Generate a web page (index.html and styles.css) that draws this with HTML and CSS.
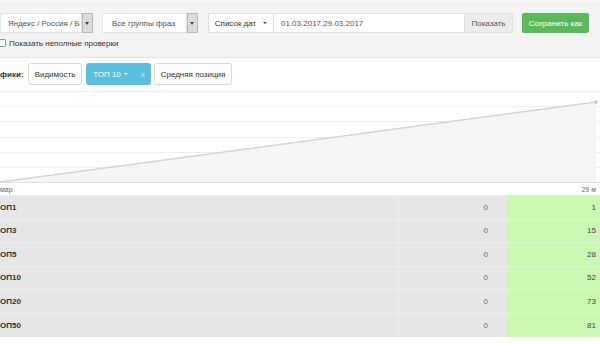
FILE: index.html
```html
<!DOCTYPE html>
<html lang="ru">
<head>
    <meta charset="UTF-8">
    <meta name="viewport" content="width=device-width, initial-scale=1.0">
    <title>Проверки позиций</title>
    <link rel="stylesheet" href="styles.css">
</head>
<body>
    <div class="toolbar">
        <div class="toolbar-row">
            <div class="select select-engine">
                <span class="select-value">Яндекс / Россия / Б</span>
                <span class="select-arrow"></span>
            </div>
            <div class="select select-groups">
                <span class="select-value">Все группы фраз</span>
                <span class="select-arrow"></span>
            </div>
            <div class="date-group">
                <button class="btn btn-dates">Список дат <span class="caret"></span></button>
                <div class="date-input">01.03.2017,29.03.2017</div>
                <button class="btn btn-show">Показать</button>
            </div>
            <button class="btn btn-save">Сохранить как</button>
        </div>
        <label class="check-row">
            <span class="checkbox"></span>
            Показать неполные проверки
        </label>
    </div>

    <div class="charts-bar">
        <span class="charts-label">фики:</span>
        <button class="btn btn-default btn-visibility">Видимость</button>
        <div class="btn-split">
            <button class="btn btn-info">ТОП 10 <span class="caret caret-light"></span></button>
            <button class="btn btn-info btn-close">x</button>
        </div>
        <button class="btn btn-default btn-position">Средняя позиция</button>
    </div>

    <div class="chart">
        <svg width="600" height="93" viewBox="0 0 600 93">
            <g stroke="#eeeeee" stroke-width="1">
                <line x1="0" y1="0.5" x2="600" y2="0.5"/>
                <line x1="0" y1="15.5" x2="600" y2="15.5"/>
                <line x1="0" y1="30.5" x2="600" y2="30.5"/>
                <line x1="0" y1="46.5" x2="600" y2="46.5"/>
                <line x1="0" y1="61.5" x2="600" y2="61.5"/>
                <line x1="0" y1="76.5" x2="600" y2="76.5"/>
            </g>
            <polygon points="0,91 596,11 596,91" fill="#f5f5f5"/>
            <line x1="0" y1="91.5" x2="600" y2="91.5" stroke="#dddddd"/>
            <line x1="0" y1="91" x2="596" y2="11" stroke="#d4d4d4" stroke-width="1.5"/>
            <circle cx="596" cy="11" r="2" fill="#cccccc"/>
        </svg>
    </div>
    <div class="axis">
        <span>мар</span>
        <span>29 м</span>
    </div>

    <table class="stats">
        <tbody></tbody>
    </table>

    <script>
        const rows = [
            { name: 'ОП1', before: 0, after: 1 },
            { name: 'ОП3', before: 0, after: 15 },
            { name: 'ОП5', before: 0, after: 28 },
            { name: 'ОП10', before: 0, after: 52 },
            { name: 'ОП20', before: 0, after: 73 },
            { name: 'ОП50', before: 0, after: 81 }
        ];
        const body = document.querySelector('.stats tbody');

        rows.forEach(item => {
            const tr = document.createElement('tr');
            tr.innerHTML = `
                <td class="name">${item.name}</td>
                <td class="before">${item.before}</td>
                <td class="after">${item.after}</td>
            `;
            body.appendChild(tr);
        });
    </script>
</body>
</html>
```

FILE: styles.css
```css
body {
    margin: 0;
    font-family: "Liberation Sans", Arial, sans-serif;
    font-size: 8px;
    color: #333;
    background-color: #fff;
    overflow: hidden;
}

button {
    font-family: inherit;
    font-size: 8px;
}

.toolbar {
    height: 58px;
    background-color: #f3f3f3;
    border-top: 2px solid #f8f8f8;
    border-bottom: 1px solid #e4e4e4;
    box-sizing: border-box;
    padding-top: 11px;
}

.toolbar-row {
    display: flex;
    align-items: center;
    height: 20px;
}

.select {
    display: flex;
    height: 20px;
    box-sizing: border-box;
}

.select-value {
    flex: 1;
    display: flex;
    align-items: center;
    background-color: #fff;
    border: 1px solid #e2e2e2;
    color: #555;
}

.select-arrow {
    width: 9px;
    background-color: #dcdcdc;
    border: 1px solid #b9b9b9;
    position: relative;
}

.select-arrow::after {
    content: "";
    position: absolute;
    left: 2px;
    top: 8px;
    border-left: 2.5px solid transparent;
    border-right: 2.5px solid transparent;
    border-top: 3px solid #444;
}

.select-engine {
    width: 93px;
}

.select-engine .select-value {
    padding-left: 7px;
}

.select-groups {
    width: 96px;
    margin-left: 9px;
}

.select-groups .select-value {
    padding-left: 9px;
}

.date-group {
    display: flex;
    width: 305px;
    height: 20px;
    margin-left: 10px;
    border: 1px solid #e0e0e0;
    box-sizing: border-box;
    background-color: #fff;
}

.btn {
    border: none;
    padding: 0;
    margin: 0;
    cursor: pointer;
    display: flex;
    align-items: center;
    justify-content: center;
    box-sizing: border-box;
}

.btn-dates {
    width: 65px;
    background-color: #fff;
    color: #333;
    border-right: 1px solid #e0e0e0;
}

.caret {
    display: inline-block;
    margin-left: 7px;
    border-left: 2.5px solid transparent;
    border-right: 2.5px solid transparent;
    border-top: 2.5px solid #444;
}

.caret-light {
    margin-left: 3px;
    border-top-color: #fff;
}

.date-input {
    flex: 1;
    padding-left: 7px;
    display: flex;
    align-items: center;
    color: #555;
}

.btn-show {
    width: 48px;
    background-color: #ececec;
    color: #555;
    border-left: 1px solid #dcdcdc;
}

.btn-save {
    margin-left: 9px;
    width: 67px;
    height: 20px;
    background-color: #5cb85c;
    color: #fff;
    border-radius: 2px;
}

.check-row {
    display: flex;
    align-items: center;
    height: 10px;
    margin-top: 5px;
    color: #333;
}

.checkbox {
    width: 6px;
    height: 6px;
    margin-left: -2px;
    margin-right: 3px;
    border: 1px solid #999;
    background-color: #fff;
    border-radius: 1px;
}

.charts-bar {
    display: flex;
    align-items: center;
    height: 33px;
    padding-bottom: 1px;
    box-sizing: border-box;
}

.charts-label {
    font-weight: bold;
    width: 28px;
}

.btn-default {
    height: 22px;
    background-color: #fff;
    color: #333;
    border: 1px solid #d8d8d8;
    border-radius: 3px;
}

.btn-visibility {
    width: 54px;
}

.btn-position {
    width: 78px;
}

.btn-split {
    display: flex;
    margin: 0 3px 0 4px;
}

.btn-info {
    height: 22px;
    background-color: #5bc0de;
    color: #fff;
}

.btn-split .btn-info:first-child {
    width: 49px;
    border-radius: 3px 0 0 3px;
}

.btn-close {
    width: 16px;
    border-radius: 0 3px 3px 0;
    color: #c9ecf7;
}

.chart {
    height: 93px;
}

.chart svg {
    display: block;
}

.axis {
    display: flex;
    justify-content: space-between;
    height: 11px;
    padding-right: 4px;
    align-items: center;
    font-size: 7px;
    color: #666;
}

.stats {
    width: 600px;
    border-collapse: collapse;
}

.stats td {
    height: 23.5px;
    padding: 0;
    box-sizing: border-box;
    border-top: 1px solid #efefef;
    background-color: #e6e6e6;
}

.stats .name {
    width: 398px;
    font-weight: bold;
    color: #333;
    border-right: 1px solid #efefef;
}

.stats .before {
    width: 109px;
    text-align: right;
    padding-right: 19px;
    color: #666;
}

.stats .after {
    text-align: right;
    padding-right: 4px;
    background-color: #ccf7b4;
    border-top-color: #d8fbc6;
    color: #444;
}
```
